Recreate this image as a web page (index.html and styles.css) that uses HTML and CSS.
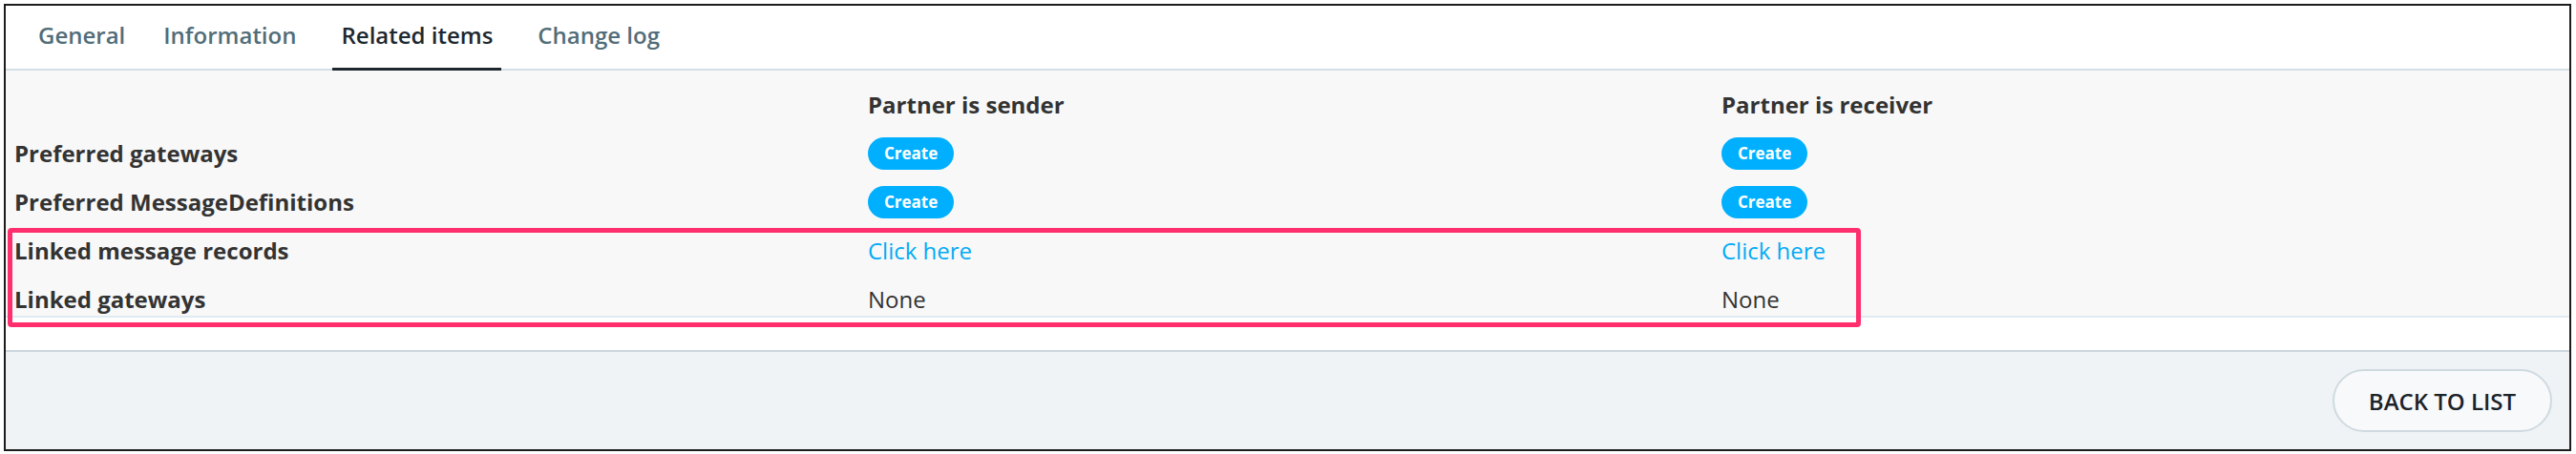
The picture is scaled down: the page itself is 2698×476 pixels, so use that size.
FILE: index.html
```html
<!DOCTYPE html>
<html>
<head>
<meta charset="utf-8">
<link rel="stylesheet" href="styles.css">
</head>
<body>
<div class="frame">
  <nav class="tabs">
    <a class="tab">General</a>
    <a class="tab">Information</a>
    <a class="tab active">Related items</a>
    <a class="tab">Change log</a>
  </nav>
  <div class="content">
    <div class="grid">
      <div class="cell head"></div>
      <div class="cell head">Partner is sender</div>
      <div class="cell head">Partner is receiver</div>

      <div class="cell label">Preferred gateways</div>
      <div class="cell"><button class="create">Create</button></div>
      <div class="cell"><button class="create">Create</button></div>

      <div class="cell label">Preferred MessageDefinitions</div>
      <div class="cell"><button class="create">Create</button></div>
      <div class="cell"><button class="create">Create</button></div>

      <div class="cell label">Linked message records</div>
      <div class="cell"><a class="link">Click here</a></div>
      <div class="cell"><a class="link">Click here</a></div>

      <div class="cell label">Linked gateways</div>
      <div class="cell value">None</div>
      <div class="cell value">None</div>
    </div>
    <div class="highlight"></div>
  </div>
  <div class="spacer"></div>
  <footer class="footer">
    <button class="back">BACK TO LIST</button>
  </footer>
</div>
</body>
</html>
```
FILE: styles.css
```css
html, body {
  margin: 0;
  padding: 0;
  background: #ffffff;
}
body {
  font-family: "Open Sans", "Liberation Sans", sans-serif;
  width: 2698px;
  height: 476px;
  overflow: hidden;
}
.frame {
  margin: 4px 0 0 4px;
  width: 2689px;
  height: 469px;
  box-sizing: border-box;
  border: 2px solid #1c1c1c;
  display: flex;
  flex-direction: column;
  background: #ffffff;
  position: relative;
}
.tabs {
  height: 66px;
  border-bottom: 2px solid #d3dee4;
  display: flex;
  align-items: stretch;
  padding-left: 25px;
  gap: 22px;
  background: #ffffff;
}
.tab {
  display: flex;
  align-items: center;
  padding: 0 9px 4px;
  font-size: 24px;
  font-weight: 600;
  color: #526d79;
  border-bottom: 3px solid transparent;
  margin-bottom: -2px;
}
.tab.active {
  margin: 0 7px -2px;
  color: #1d2830;
  border-bottom-color: #1f272e;
}
.content {
  position: relative;
  background: #f8f8f8;
  border-bottom: 2px solid #e0eaf1;
}
.grid {
  display: grid;
  grid-template-columns: 894px 894px 1fr;
}
.cell {
  padding: 17px 9px 0;
  height: 34px;
  line-height: 34px;
  font-size: 24px;
  color: #333333;
}
.cell.head {
  padding-top: 19px;
  font-weight: 700;
}
.cell.label {
  font-weight: 700;
}
.create {
  height: 34px;
  padding: 0 17px;
  border: none;
  border-radius: 17px;
  background: #00b0ff;
  color: #ffffff;
  font-family: "Open Sans", "Liberation Sans", sans-serif;
  font-size: 17px;
  font-weight: 700;
  line-height: 34px;
  display: block;
}
.link {
  color: #03abf5;
}
.value {
  color: #333333;
}
.highlight {
  position: absolute;
  left: 2px;
  top: 165px;
  width: 1941px;
  height: 104px;
  box-sizing: border-box;
  border: 5px solid #ff2f6d;
  border-radius: 4px;
}
.spacer {
  height: 34px;
  background: #ffffff;
}
.footer {
  flex: 1;
  border-top: 2px solid #ccd6dc;
  background: #eff3f6;
  display: flex;
  align-items: center;
  justify-content: flex-end;
  padding-right: 18px;
}
.back {
  height: 66px;
  width: 230px;
  border: 2px solid #cfdae0;
  border-radius: 33px;
  background: #f7f9fb;
  color: #1c2329;
  font-family: "Open Sans", "Liberation Sans", sans-serif;
  font-size: 24px;
  font-weight: 600;
  padding: 0;
}
```
